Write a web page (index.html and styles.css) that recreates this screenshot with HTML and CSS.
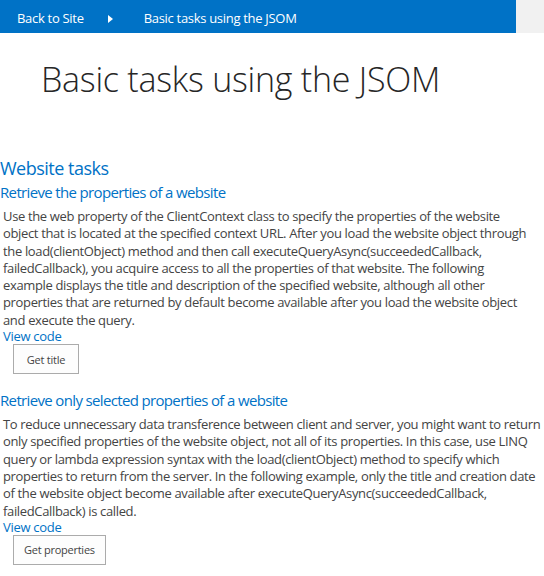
FILE: index.html
```html
<!DOCTYPE html>
<html lang="en">
<head>
<meta charset="utf-8">
<title>Basic tasks using the JSOM</title>
<link rel="stylesheet" href="styles.css">
</head>
<body>
<header class="topbar">
  <nav class="crumbs">
    <a class="crumb" href="#">Back to Site</a>
    <svg class="crumb-arrow" width="5" height="8" viewBox="0 0 5 8"><polygon points="0,0 5,4 0,8" fill="#fff"/></svg>
    <span class="crumb">Basic tasks using the JSOM</span>
  </nav>
  <div class="topbar-side"></div>
</header>
<main class="content">
  <h1 class="page-title">Basic tasks using the JSOM</h1>
  <h2 class="section-title">Website tasks</h2>

  <section class="task">
    <h3 class="task-title">Retrieve the properties of a website</h3>
    <p class="task-text">Use the web property of the ClientContext class to specify the properties of the website<br>
object that is located at the specified context URL. After you load the website object through<br>
the load(clientObject) method and then call executeQueryAsync(succeededCallback,<br>
failedCallback), you acquire access to all the properties of that website. The following<br>
example displays the title and description of the specified website, although all other<br>
properties that are returned by default become available after you load the website object<br>
and execute the query.</p>
    <a class="view-code" href="#">View code</a>
    <button class="task-btn" type="button">Get title</button>
  </section>

  <section class="task task-second">
    <h3 class="task-title">Retrieve only selected properties of a website</h3>
    <p class="task-text">To reduce unnecessary data transference between client and server, you might want to return<br>
only specified properties of the website object, not all of its properties. In this case, use LINQ<br>
query or lambda expression syntax with the load(clientObject) method to specify which<br>
properties to return from the server. In the following example, only the title and creation date<br>
of the website object become available after executeQueryAsync(succeededCallback,<br>
failedCallback) is called.</p>
    <a class="view-code" href="#">View code</a>
    <button class="task-btn" type="button">Get properties</button>
  </section>
</main>
</body>
</html>
```

FILE: styles.css
```css
html, body {
  margin: 0;
  padding: 0;
  background: #fff;
  overflow: hidden;
}
body {
  font-family: "Open Sans", "Liberation Sans", sans-serif;
  color: #444;
  font-size: 13px;
}
.topbar {
  display: flex;
  height: 33px;
}
.crumbs {
  width: 516px;
  background: #0072c6;
  display: flex;
  align-items: flex-start;
  padding: 10px 0 0 17px;
  box-sizing: border-box;
  height: 33px;
}
.crumb {
  color: #fff;
  text-decoration: none;
  font-size: 13px;
  line-height: 17px;
  letter-spacing: -0.3px;
}
.crumb-arrow {
  margin: 5px 31px 0 24px;
}
.topbar-side {
  flex: 1;
  background: #f1f1f1;
}
.content {
  display: flex;
  flex-direction: column;
  align-items: flex-start;
}
.page-title {
  margin: 24px 0 0 41px;
  font-weight: 300;
  font-size: 34px;
  line-height: 44px;
  color: #262626;
  letter-spacing: -0.25px;
}
.section-title {
  margin: 55px 0 0 0;
  font-weight: 400;
  font-size: 18px;
  line-height: 24px;
  color: #0072c6;
  letter-spacing: -0.5px;
}
.task {
  display: flex;
  flex-direction: column;
  align-items: flex-start;
}
.task-second {
  margin-top: 14px;
}
.task-title {
  margin: 2px 0 0 0;
  font-weight: 400;
  font-size: 15px;
  line-height: 20px;
  color: #0072c6;
  letter-spacing: -0.65px;
}
.task-text {
  margin: 6px 0 0 3px;
  white-space: nowrap;
  font-size: 13px;
  line-height: 17.3px;
  letter-spacing: -0.35px;
}
.view-code {
  margin: 0 0 0 3px;
  color: #0072c6;
  text-decoration: none;
  font-size: 13px;
  line-height: 15px;
  letter-spacing: -0.3px;
}
.task-btn {
  margin: 0 0 0 13px;
  min-width: 66px;
  height: 30px;
  padding: 0 10px;
  border: 1px solid #ababab;
  background: #fdfdfd;
  color: #444;
  font-family: "Open Sans", "Liberation Sans", sans-serif;
  font-size: 11px;
  letter-spacing: -0.25px;
}
```
